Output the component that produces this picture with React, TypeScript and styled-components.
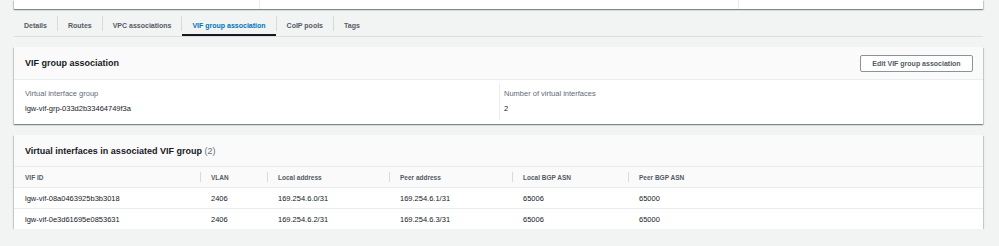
import React from 'react'
import styled, { createGlobalStyle } from 'styled-components'

const GlobalStyle = createGlobalStyle`
  html, body {
    margin: 0;
    padding: 0;
    background: #f2f3f3;
    font-family: 'Liberation Sans', Arial, sans-serif;
    color: #16191f;
  }
`

const Page = styled.div`
  padding: 0 16px 0 14px;
  width: 969px;
`

const Card = styled.div`
  background: #fff;
  box-shadow: 0 1px 1px 0 rgba(0, 28, 36, 0.3), 1px 1px 1px 0 rgba(0, 28, 36, 0.15),
    -1px 1px 1px 0 rgba(0, 28, 36, 0.15);
`

const TopCard = styled(Card)`
  height: 9px;
  display: grid;
  grid-template-columns: 245px 479px 1fr;
`

const TopCell = styled.div<{ $divider?: boolean }>`
  border-left: ${(p) => (p.$divider ? '1px solid #eaeded' : 'none')};
  margin-top: -4px;
`

const TabList = styled.div`
  margin-top: 6px;
  display: flex;
  align-items: stretch;
  height: 21px;
  border-bottom: 1px solid #dcdfdf;
`

const Tab = styled.div<{ $active?: boolean }>`
  display: flex;
  align-items: center;
  padding: 1px 10px 0;
  font-size: 7px;
  font-weight: 700;
  color: ${(p) => (p.$active ? '#0073bb' : '#545b64')};
  border-bottom: 2px solid ${(p) => (p.$active ? '#16191f' : 'transparent')};
  white-space: nowrap;
`

const TabSep = styled.div`
  width: 1px;
  height: 15px;
  margin-top: 1px;
  background: #d5dbdb;
`

const SectionCard = styled(Card)<{ $gap: number }>`
  margin-top: ${(p) => p.$gap}px;
`

const CardHeader = styled.div<{ $h: number }>`
  height: ${(p) => p.$h}px;
  box-sizing: border-box;
  background: #fafafa;
  border-bottom: 1px solid #eaeded;
  display: flex;
  align-items: center;
  justify-content: space-between;
  padding: 0 10px 0 11px;
`

const Title = styled.h2`
  margin: 0;
  font-size: 9px;
  font-weight: 700;
  color: #16191f;
`

const Count = styled.span`
  font-weight: 400;
  color: #687078;
`

const Button = styled.button`
  height: 17px;
  width: 113px;
  box-sizing: border-box;
  border: 1px solid #879596;
  border-radius: 2px;
  background: #fff;
  color: #545b64;
  font-family: inherit;
  font-size: 7px;
  font-weight: 700;
  padding: 0;
  cursor: pointer;
`

const Columns = styled.div`
  display: grid;
  grid-template-columns: 485px 1fr;
  height: 44px;
`

const Column = styled.div<{ $divider?: boolean }>`
  padding: ${(p) => (p.$divider ? '5px 11px 0 4px' : '9px 11px 0 11px')};
  border-left: ${(p) => (p.$divider ? '1px solid #eaeded' : 'none')};
  margin: ${(p) => (p.$divider ? '4px 0' : '0')};
`

const Label = styled.div`
  font-size: 7.5px;
  line-height: 10px;
  color: #5f6b7a;
`

const Value = styled.div`
  margin-top: 5px;
  font-size: 7.5px;
  line-height: 10px;
  color: #16191f;
`

const Table = styled.table`
  width: 100%;
  border-collapse: collapse;
  table-layout: fixed;
`

const Th = styled.th<{ $first?: boolean }>`
  position: relative;
  height: 20px;
  padding: 0 0 0 11px;
  text-align: left;
  font-size: 6.5px;
  font-weight: 700;
  color: #545b64;
  background: #fafafa;
  border-bottom: 1px solid #eaeded;

  &::before {
    content: '';
    display: ${(p) => (p.$first ? 'none' : 'block')};
    position: absolute;
    left: 0;
    top: 5px;
    width: 1px;
    height: 10px;
    background: #d5dbdb;
  }
`

const Td = styled.td`
  height: 20px;
  padding: 0 0 0 11px;
  font-size: 7.5px;
  color: #16191f;
`

const Tr = styled.tr<{ $last?: boolean }>`
  border-bottom: ${(p) => (p.$last ? 'none' : '1px solid #eaeded')};
`

const tabs = ['Details', 'Routes', 'VPC associations', 'VIF group association', 'CoIP pools', 'Tags']

const columns = [
  { name: 'VIF ID', width: 186 },
  { name: 'VLAN', width: 67 },
  { name: 'Local address', width: 122 },
  { name: 'Peer address', width: 123 },
  { name: 'Local BGP ASN', width: 116 },
  { name: 'Peer BGP ASN', width: undefined },
]

const rows = [
  ['lgw-vif-08a0463925b3b3018', '2406', '169.254.6.0/31', '169.254.6.1/31', '65006', '65000'],
  ['lgw-vif-0e3d61695e0853631', '2406', '169.254.6.2/31', '169.254.6.3/31', '65006', '65000'],
]

export default function App() {
  return (
    <>
      <GlobalStyle />
      <Page>
        <TopCard>
          <TopCell />
          <TopCell $divider />
          <TopCell $divider />
        </TopCard>

        <TabList>
          {tabs.map((t, i) => (
            <React.Fragment key={t}>
              {i > 0 && <TabSep />}
              <Tab $active={t === 'VIF group association'}>{t}</Tab>
            </React.Fragment>
          ))}
        </TabList>

        <SectionCard $gap={10}>
          <CardHeader $h={33}>
            <Title>VIF group association</Title>
            <Button>Edit VIF group association</Button>
          </CardHeader>
          <Columns>
            <Column>
              <Label>Virtual interface group</Label>
              <Value>lgw-vif-grp-033d2b33464749f3a</Value>
            </Column>
            <Column $divider>
              <Label>Number of virtual interfaces</Label>
              <Value>2</Value>
            </Column>
          </Columns>
        </SectionCard>

        <SectionCard $gap={11}>
          <CardHeader $h={32}>
            <Title>
              Virtual interfaces in associated VIF group <Count>(2)</Count>
            </Title>
          </CardHeader>
          <Table>
            <colgroup>
              {columns.map((c) => (
                <col key={c.name} style={c.width ? { width: c.width } : undefined} />
              ))}
            </colgroup>
            <thead>
              <tr>
                {columns.map((c, i) => (
                  <Th key={c.name} $first={i === 0}>
                    {c.name}
                  </Th>
                ))}
              </tr>
            </thead>
            <tbody>
              {rows.map((r, ri) => (
                <Tr key={r[0]} $last={ri === rows.length - 1}>
                  {r.map((cell, ci) => (
                    <Td key={ci}>{cell}</Td>
                  ))}
                </Tr>
              ))}
            </tbody>
          </Table>
        </SectionCard>
      </Page>
    </>
  )
}
